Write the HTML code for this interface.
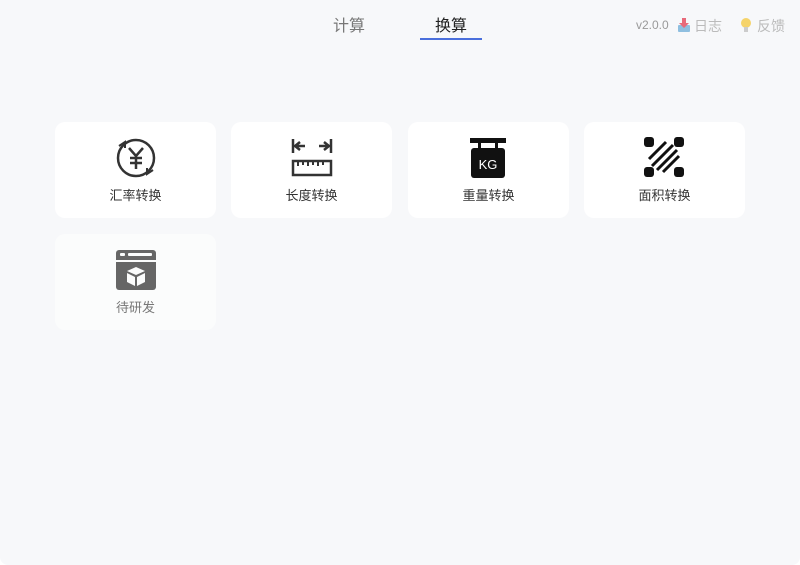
<!DOCTYPE html>
<html><head><meta charset="utf-8"><style>
*{margin:0;padding:0;box-sizing:border-box}
html,body{width:800px;height:565px;overflow:hidden;background:#fff}
.win{position:absolute;left:0;top:0;width:800px;height:565px;background:#f7f8fa;border-radius:0 0 8px 8px;font-family:"Liberation Sans","Noto Sans CJK SC",sans-serif}
.tab{position:absolute;top:12px;font-size:16px;color:#777}
.tab.on{color:#222}
.ul{position:absolute;left:420px;top:38px;width:62px;height:2px;background:#4a6fdc}
.r{position:absolute;top:18px;font-size:12px;color:#999}
.card{position:absolute;width:161px;height:96px;background:#fff;border-radius:10px}
.card svg{position:absolute;left:60px;top:15px}
.card span{position:absolute;left:0;right:0;top:63px;text-align:center;font-size:13px;color:#333}
</style></head><body><div class="win">
<div class="tab" style="left:333px">计算</div>
<div class="tab on" style="left:435px">换算</div>
<div class="ul"></div>
<div class="r" style="left:636px">v2.0.0</div>
<svg style="position:absolute;left:678px;top:18px" width="12" height="14" viewBox="0 0 12 14"><rect x="0" y="7" width="12" height="7" rx="1" fill="#8fbfe0"/><path d="M4 0 H8 V5 H11 L6 10 L1 5 H4Z" fill="#e86a7a"/></svg>
<div class="r" style="left:694px;font-size:14px;top:16px;color:#bbb">日志</div>
<svg style="position:absolute;left:741px;top:18px" width="10" height="14" viewBox="0 0 10 14"><circle cx="5" cy="5" r="5" fill="#f5d36a"/><rect x="3" y="9" width="4" height="5" fill="#ccc"/></svg>
<div class="r" style="left:757px;font-size:14px;top:16px;color:#bbb">反馈</div>

<div class="card" style="left:55px;top:122px">
<svg width="42" height="42" viewBox="0 0 42 42" fill="none" stroke="#333" stroke-width="2.5"><circle cx="21" cy="21" r="18"/><path d="M4 9 L10 5 L10 11" stroke-width="2"/><path d="M38 33 L32 37 L32 31" stroke-width="2"/><path d="M14 11 L21 19 L28 11 M21 19 V32 M15 21 H27 M15 26 H27"/></svg>
<span>汇率转换</span></div>
<div class="card" style="left:231px;top:122px">
<svg width="42" height="42" viewBox="0 0 42 42" fill="none" stroke="#333" stroke-width="2.5"><path d="M2 2 V16 M40 2 V16 M4 9 H14 M9 5 L4 9 L9 13 M28 9 H38 M33 5 L38 9 L33 13"/><rect x="2" y="24" width="38" height="14"/><path d="M7 24 V29 M12 24 V28 M17 24 V29 M22 24 V28 M27 24 V29 M32 24 V28" stroke-width="2"/></svg>
<span>长度转换</span></div>
<div class="card" style="left:408px;top:122px">
<svg width="42" height="42" viewBox="0 0 42 42"><rect x="2" y="1" width="36" height="5" fill="#111"/><rect x="10" y="6" width="3" height="6" fill="#111"/><rect x="27" y="6" width="3" height="6" fill="#111"/><rect x="3" y="11" width="34" height="30" rx="3" fill="#111"/><text x="20" y="32" fill="#fff" font-size="13" text-anchor="middle" font-family="Liberation Sans">KG</text></svg>
<span>重量转换</span></div>
<div class="card" style="left:584px;top:122px">
<svg width="42" height="42" viewBox="0 0 42 42"><rect x="0" y="0" width="10" height="10" rx="3" fill="#111"/><rect x="30" y="0" width="10" height="10" rx="3" fill="#111"/><rect x="0" y="30" width="10" height="10" rx="3" fill="#111"/><rect x="30" y="30" width="10" height="10" rx="3" fill="#111"/><path d="M5 22 L22 5 M8 29 L29 8 M13 33 L33 13 M19 35 L35 19" stroke="#111" stroke-width="3"/></svg>
<span>面积转换</span></div>
<div class="card" style="left:55px;top:234px;background:#fbfcfc">
<svg width="42" height="42" viewBox="0 0 42 42"><rect x="1" y="1" width="40" height="40" rx="3" fill="#666"/><rect x="1" y="11" width="40" height="2" fill="#fbfcfc"/><rect x="5" y="4" width="5" height="3" rx="1" fill="#fbfcfc"/><rect x="13" y="4" width="24" height="3" rx="1" fill="#fbfcfc"/><path d="M21 18 L30 22 L21 26 L12 22Z M12 24 L20 28 V37 L12 33Z M30 24 L22 28 V37 L30 33Z" fill="#fbfcfc"/></svg>
<span style="color:#777">待研发</span></div>
</div></body></html>
